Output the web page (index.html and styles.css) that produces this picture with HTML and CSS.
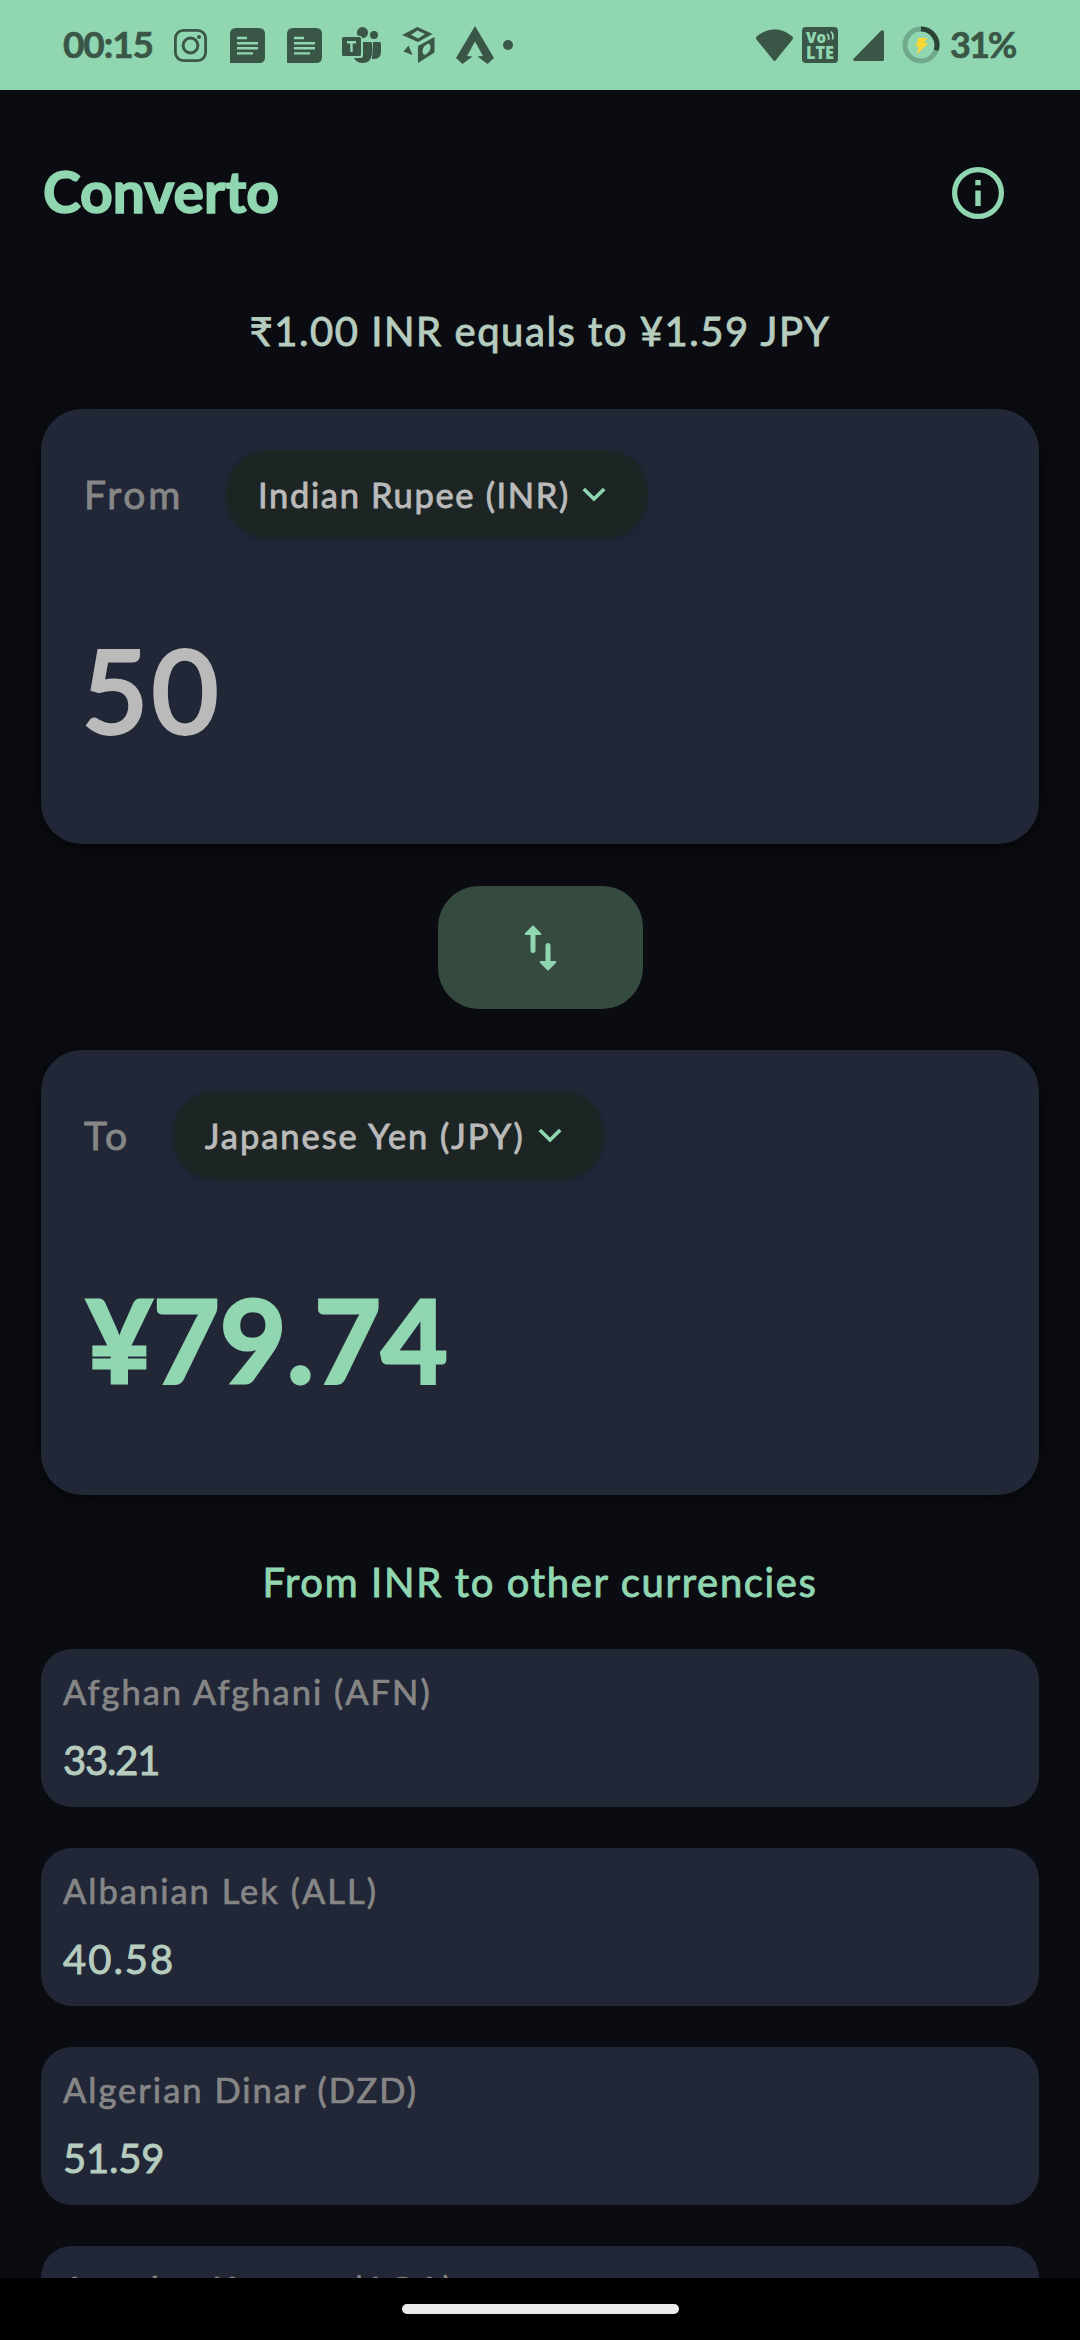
FILE: index.html
```html
<!DOCTYPE html>
<html lang="en">
<head>
<meta charset="utf-8">
<title>Converto</title>
<link rel="stylesheet" href="styles.css">
</head>
<body>
<div class="screen">
  <header class="status">
    <span class="status-text clock">00:15</span>
    <svg class="ic-insta" width="33" height="33" viewBox="0 0 33 33" fill="none" stroke="currentColor"><rect x="1.4" y="1.4" width="30.2" height="30.2" rx="8" stroke-width="2.8"/><circle cx="16.5" cy="16.5" r="7.4" stroke-width="3"/><circle cx="25" cy="8" r="2" fill="currentColor" stroke="none"/></svg>
    <svg class="ic-doc" width="35" height="35" viewBox="0 0 35 35"><path fill="currentColor" d="M6 0H29Q35 0 35 6V29Q35 35 29 35H0V6Q0 0 6 0Z"/><path stroke="#90d6b0" stroke-width="2.4" d="M7 10H17M7 15.2H28M7 20.2H28M7 25.4H23"/></svg>
    <svg class="ic-doc2" width="35" height="35" viewBox="0 0 35 35"><path fill="currentColor" d="M6 0H29Q35 0 35 6V29Q35 35 29 35H0V6Q0 0 6 0Z"/><path stroke="#90d6b0" stroke-width="2.4" d="M7 10H17M7 15.2H28M7 20.2H28M7 25.4H23"/></svg>
    <svg class="ic-teams" width="39" height="36" viewBox="0 0 39 36" fill="currentColor"><circle cx="20.5" cy="5.6" r="5.6"/><circle cx="32" cy="8" r="4"/><path d="M31 15H37.500Q39 15 39 16.500V25Q39 32 32 32H30Z"/><path d="M21 15H28.500Q30 15 30 16.500V27Q29 36 20.500 36Q14.500 36 12 31H19Q21 31 21 29Z"/><rect x="-1" y="8.800" width="21.200" height="21.200" rx="2.500" fill="#90d6b0"/><rect x="0" y="10" width="19" height="19" rx="1.500"/><path d="M5 15.200H14M9.500 15V25" stroke="#90d6b0" stroke-width="2.400"/></svg>
    <svg class="ic-cube" width="33" height="36" viewBox="0 0 33 36" fill="currentColor" fill-rule="evenodd"><path d="M15.500 0L30.500 7L16 15L0 8ZM15.500 3.500L9 7.800L16 11.500L23 7Z"/><path d="M32.500 10V25.500L16 36V19ZM27 16.500Q20.500 18.500 20.500 24Q20.500 28.500 23.500 27.500Q28.500 25 28.500 20Q28.500 17 27 16.500Z"/><path d="M6.500 18.500L10.500 28L1.500 24.500Z"/></svg>
    <svg class="ic-apex" width="38" height="38" viewBox="0 0 38 38" fill="currentColor"><path d="M19 0L38 32L31.500 38L21.500 30.500L27 30L19 15.500L11 30L16.500 30.500L6.500 38L0 32Z"/></svg>
    <span class="more-dot"></span>
    <span class="spacer"></span>
    <svg class="ic-wifi" width="37" height="33" viewBox="0 0 37 33" fill="currentColor"><path d="M.6 7.500Q18.500 -7 36.400 7.500Q37.500 9 36.500 10.500L19.500 31.500Q18.500 32.500 17.500 31.500L.5 10.500Q-.5 9 .6 7.500Z"/></svg>
    <svg class="ic-volte" width="36" height="36" viewBox="0 0 36 36"><rect width="36" height="36" rx="4" fill="currentColor"/><g class="volte"><text x="4" y="16" font-size="16" textLength="20" lengthAdjust="spacingAndGlyphs">Vo</text><text x="4" y="31.800" font-size="17" textLength="28" lengthAdjust="spacingAndGlyphs">LTE</text></g><path fill="none" stroke="#90d6b0" stroke-width="1.800" d="M25 7Q27.500 9 26.500 13M29 4.500Q32 8 30.500 12.500"/></svg>
    <svg class="ic-signal" width="31" height="31" viewBox="0 0 31 31" fill="currentColor"><path d="M28 .8Q31 -.8 31 2V29.500Q31 31 29.500 31H2Q-1 31 .8 28.500Z"/></svg>
    <svg class="ic-batt" width="38" height="38" viewBox="0 0 38 38" fill="none"><circle cx="19" cy="19" r="16" stroke="#6fa88b" stroke-width="5"/><path d="M19 3A16 16 0 0 1 34.100 24.200" stroke="#2b4337" stroke-width="5"/><path d="M16.500 12H25.500L22 17H26.500L14.500 28.500L17 20.500H13.500Z" fill="#fdd835"/></svg>
    <span class="status-text pct">31%</span>
  </header>

  <main class="app">
    <div class="topbar">
      <h1 class="brand">Converto</h1>
      <svg width="52" height="52" viewBox="0 0 52 52" fill="none" stroke="#90d6b0"><circle cx="26" cy="26" r="23.400" stroke-width="5.200"/><path stroke-width="5.400" d="M26 13V18.200M26 23.500V39"/></svg>
    </div>
    <p class="rate">₹1.00 INR equals to ¥1.59 JPY</p>

    <section class="card card-from">
      <div class="row">
        <span class="dir dir-from">From</span>
        <button class="picker"><span>Indian Rupee (INR)</span><svg width="24" height="15" viewBox="0 0 24 15" fill="none" stroke="#90d6b0" stroke-width="3.600"><path d="M1.800 2L12 12L22.200 2"/></svg></button>
      </div>
      <div class="amount">50</div>
    </section>

    <button class="swap">
      <svg width="33" height="46" viewBox="0 0 33 46" fill="#90d6b0" stroke="#90d6b0" stroke-linejoin="round" stroke-linecap="round"><path stroke-width="2" d="M9 1.500L16.300 9H1.700ZM24 44.500L31.300 37H16.700Z"/><path stroke-width="5" d="M9 8V25.500M24 20.500V38"/></svg>
    </button>

    <section class="card card-to">
      <div class="row">
        <span class="dir dir-to">To</span>
        <button class="picker picker-to"><span>Japanese Yen (JPY)</span><svg width="24" height="15" viewBox="0 0 24 15" fill="none" stroke="#90d6b0" stroke-width="3.600"><path d="M1.800 2L12 12L22.200 2"/></svg></button>
      </div>
      <div class="amount result">¥79.74</div>
    </section>

    <h2 class="others">From INR to other currencies</h2>
    <ul class="list">
      <li class="item"><span class="name">Afghan Afghani (AFN)</span><span class="value value-tight">33.21</span></li>
      <li class="item"><span class="name">Albanian Lek (ALL)</span><span class="value value-wide">40.58</span></li>
      <li class="item"><span class="name">Algerian Dinar (DZD)</span><span class="value">51.59</span></li>
      <li class="item"><span class="name">Angolan Kwanza (AOA)</span></li>
    </ul>
  </main>
  <footer class="nav"><span class="handle"></span></footer>
</div>
</body>
</html>
```
FILE: styles.css
```css
* { box-sizing: border-box; margin: 0; padding: 0; }
body { background: #0a0c11; font-family: Lato, "Noto Sans", sans-serif; }
button { border: 0; font: inherit; }
svg { display: block; flex: none; }
.screen { width: 1080px; height: 2340px; overflow: hidden; display: flex; flex-direction: column; }

.status { flex: none; height: 90px; background: #90d6b0; color: #3a5647; display: flex; align-items: center; padding: 0 64px 0 63px; }
.status-text { font-size: 37px; font-weight: 700; white-space: nowrap; line-height: 88px; margin-top: -2px; letter-spacing: -1.1px; -webkit-text-stroke: .6px currentColor; }
.clock { width: 111px; }
.ic-doc { margin-left: 23px; }
.ic-doc2 { margin-left: 22px; }
.ic-teams { margin-left: 20px; }
.ic-cube { margin-left: 21px; }
.ic-apex { margin-left: 21px; }
.more-dot { width: 10px; height: 10px; border-radius: 50%; background: currentColor; margin-left: 9px; }
.spacer { flex: 1; }
.ic-volte { margin: 0 15px 0 9px; }
.volte { fill: #90d6b0; font-family: "Open Sans", sans-serif; font-weight: 800; }
.ic-batt { margin: 0 10px 0 18px; }
.pct { width: 66px; font-size: 36px; letter-spacing: -2px; }

.app { flex: 1; min-height: 0; overflow: hidden; padding: 0 41px; display: flex; flex-direction: column; }
.topbar { flex: none; height: 206px; display: flex; align-items: center; justify-content: space-between; padding: 0 35px 0 2px; }
.brand { font-size: 57px; font-weight: 700; color: #90d6b0; line-height: 200px; margin-top: -4px; -webkit-text-stroke: 1.6px currentColor; }
.rate { flex: none; height: 113px; line-height: 70px; font-size: 40px; letter-spacing: 1.55px; color: #b5ccbf; text-align: center; white-space: nowrap; -webkit-text-stroke: .9px currentColor; }

.card { flex: none; background: #212737; border-radius: 41px; padding: 41px 43px; box-shadow: 0 3px 14px rgba(0, 0, 0, .55); }
.card-from { height: 435px; }
.card-to { height: 445px; }
.row { display: flex; align-items: center; height: 88px; }
.dir { font-size: 39px; letter-spacing: 2.8px; color: #868686; -webkit-text-stroke: .9px currentColor; }
.dir-from { width: 142px; }
.dir-to { width: 89px; }
.picker { height: 88px; width: 422px; border-radius: 42px; background: #1c2424; color: #bababa; font-size: 34.5px; letter-spacing: 1.65px; display: flex; align-items: center; justify-content: space-between; padding: 0 42px 0 32px; white-space: nowrap; box-shadow: 0 3px 8px rgba(0, 0, 0, .15); -webkit-text-stroke: .9px currentColor; }
.picker-to { width: 431px; letter-spacing: 1.95px; }
.amount { margin-top: 91px; height: 120px; line-height: 120px; font-size: 114px; letter-spacing: 4px; margin-left: -2px; color: #bababa; -webkit-text-stroke: 4px currentColor; }
.result { margin-top: 99px; margin-left: 2px; font-size: 115px; letter-spacing: .2px; font-weight: 700; color: #90d6b0; -webkit-text-stroke: 3px currentColor; }

.swap { flex: none; align-self: center; width: 205px; height: 123px; margin: 42px 0 41px; border-radius: 41px; background: #364b3f; display: flex; align-items: center; justify-content: center; }

.others { flex: none; height: 154px; padding-top: 20px; line-height: 135px; font-size: 40px; font-weight: 400; letter-spacing: 1.65px; color: #90d6b0; text-align: center; -webkit-text-stroke: .9px currentColor; }
.list { list-style: none; display: flex; flex-direction: column; gap: 41px; }
.item { flex: none; height: 158px; border-radius: 31px; background: #212737; padding: 22px 22px 0; display: flex; flex-direction: column; align-items: flex-start; white-space: nowrap; }
.name { font-size: 34.5px; line-height: 42px; letter-spacing: 2px; color: #868686; -webkit-text-stroke: .7px currentColor; }
.value { margin-top: 20px; font-size: 40px; line-height: 54px; letter-spacing: -.2px; color: #b5ccbf; -webkit-text-stroke: .9px currentColor; }
.value-tight { letter-spacing: -1.2px; }
.value-wide { letter-spacing: 2px; }

.nav { flex: none; height: 62px; background: #000; display: flex; justify-content: center; padding-top: 26px; }
.handle { width: 277px; height: 10px; border-radius: 5px; background: #ebebeb; }
```
